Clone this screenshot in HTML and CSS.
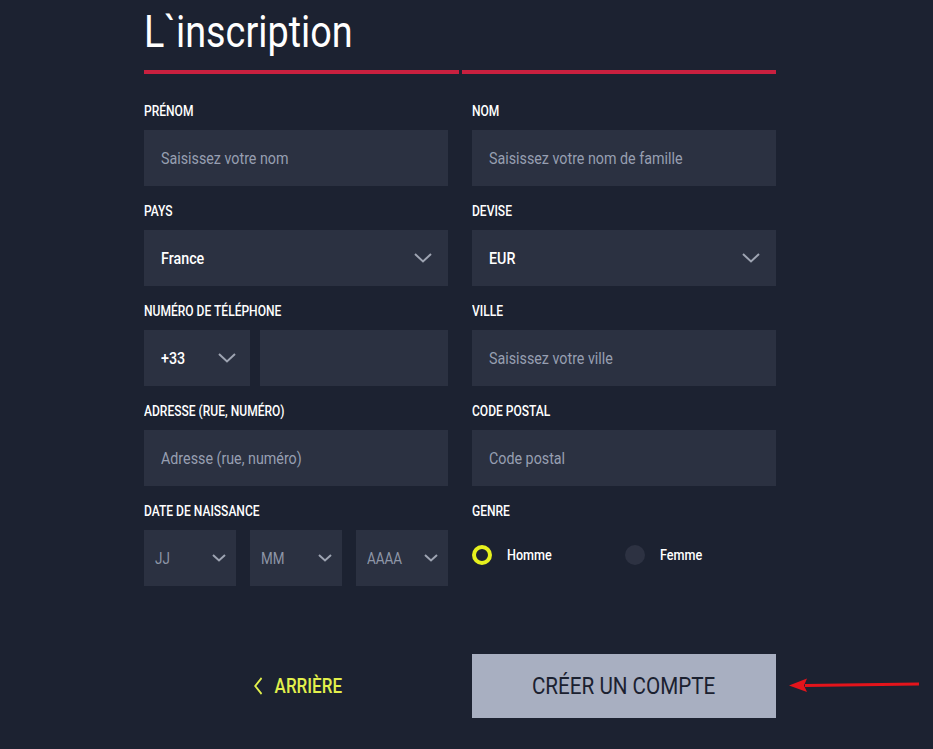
FILE: index.html
```html
<!DOCTYPE html>
<html lang="fr">
<head>
	<meta charset="utf-8">
	<title>L`inscription</title>
	<link rel="stylesheet" href="styles.css">
</head>
<body>

<div class="page">
	<h1 class="title">L`inscription</h1>
	<div class="rule"><span></span><span></span></div>

	<form class="form" action="" method="get">
		<div class="field">
			<label>PRÉNOM</label>
			<div class="box"><span class="ph">Saisissez votre nom</span></div>
		</div>
		<div class="field">
			<label>NOM</label>
			<div class="box"><span class="ph">Saisissez votre nom de famille</span></div>
		</div>

		<div class="field">
			<label>PAYS</label>
			<div class="box select"><span class="val">France</span>
				<svg class="chev" width="18" height="10" viewBox="0 0 18 10"><path d="M1 1 L9 8.5 L17 1" /></svg>
			</div>
		</div>
		<div class="field">
			<label>DEVISE</label>
			<div class="box select"><span class="val">EUR</span>
				<svg class="chev" width="18" height="10" viewBox="0 0 18 10"><path d="M1 1 L9 8.5 L17 1" /></svg>
			</div>
		</div>

		<div class="field">
			<label>NUMÉRO DE TÉLÉPHONE</label>
			<div class="phone">
				<div class="box select code"><span class="val">+33</span>
					<svg class="chev" width="18" height="10" viewBox="0 0 18 10"><path d="M1 1 L9 8.5 L17 1" /></svg>
				</div>
				<div class="box"></div>
			</div>
		</div>
		<div class="field">
			<label>VILLE</label>
			<div class="box"><span class="ph">Saisissez votre ville</span></div>
		</div>

		<div class="field">
			<label>ADRESSE (RUE, NUMÉRO)</label>
			<div class="box"><span class="ph">Adresse (rue, numéro)</span></div>
		</div>
		<div class="field">
			<label>CODE POSTAL</label>
			<div class="box"><span class="ph">Code postal</span></div>
		</div>

		<div class="field">
			<label>DATE DE NAISSANCE</label>
			<div class="date">
				<div class="box select small"><span class="ph">JJ</span>
					<svg class="chev" width="14" height="8" viewBox="0 0 14 8"><path d="M1 1 L7 6.5 L13 1" /></svg>
				</div>
				<div class="box select small"><span class="ph">MM</span>
					<svg class="chev" width="14" height="8" viewBox="0 0 14 8"><path d="M1 1 L7 6.5 L13 1" /></svg>
				</div>
				<div class="box select small"><span class="ph">AAAA</span>
					<svg class="chev" width="14" height="8" viewBox="0 0 14 8"><path d="M1 1 L7 6.5 L13 1" /></svg>
				</div>
			</div>
		</div>
		<div class="field">
			<label>GENRE</label>
			<div class="genre">
				<div class="radio on"><i></i><span>Homme</span></div>
				<div class="radio"><i></i><span>Femme</span></div>
			</div>
		</div>
	</form>

	<div class="actions">
		<a href="#" class="back">
			<svg width="11" height="18" viewBox="0 0 11 18"><path d="M9.5 1 L2 9 L9.5 17" /></svg>
			ARRIÈRE
		</a>
		<a href="#" class="create"><span>CRÉER UN COMPTE</span></a>
	</div>
</div>

<!-- flèche rouge -->
<svg class="arrow" width="136" height="16" viewBox="0 0 136 16">
	<path d="M16 7 L130 5.5 L130 8.5 L16 10 Z" fill="#e3141b" />
	<path d="M0 8.5 L18 1.5 L15 8.5 L18 15 Z" fill="#e3141b" />
</svg>

</body>
</html>
```

FILE: styles.css
```css
* { margin:0px; padding:0px; box-sizing:border-box; }
body { background:#1c2231; font-family:Roboto, "Liberation Sans", sans-serif; color:#fff; position:relative; min-height:749px; }

/* texte resserré façon "condensed" */
.title, .field label, .ph, .val, .radio span, .create span { display:inline-block; transform:scaleX(0.85); transform-origin:left center; }

.page { width:632px; margin-left:144px; padding-top:6px; }

.title { display:block; font-size:45px; line-height:52px; font-weight:400; color:#fff; transform:scaleX(0.84); }

.rule { display:flex; gap:3px; margin-top:12px; }
.rule span { display:block; flex:1; height:4px; background:#c8203f; }

.form { display:grid; grid-template-columns:304px 304px; column-gap:24px; row-gap:15px; margin-top:27px; }
.field label { display:block; font-size:14px; line-height:20px; font-weight:500; color:#fff; margin-bottom:9px; transform:scaleX(0.86); }

.box { height:56px; background:#2b3141; display:flex; align-items:center; padding-left:17px; padding-right:16px; font-size:17px; }
.box .ph { color:#979fb1; transform:scaleX(0.84); }
.box .val { color:#fff; font-weight:500; transform:scaleX(0.84); }
.select { justify-content:space-between; }
.chev path { fill:none; stroke:#9ea4b2; stroke-width:2; }

.phone { display:flex; gap:10px; }
.phone .code { width:106px; padding-right:14px; }
.phone .box:last-child { flex:1; }

.date { display:flex; gap:14px; }
.date .small { width:92px; padding-left:11px; padding-right:10px; font-size:16px; }
.date .small .ph { color:#8e96a7; }

.genre { height:56px; display:grid; grid-template-columns:153px 151px; align-items:center; padding-bottom:6px; }
.radio { display:flex; align-items:center; gap:15px; font-size:15px; font-weight:500; }
.radio span { transform:scaleX(0.84); }
.radio i { display:block; width:20px; height:20px; border-radius:50%; background:#2d3242; }
.radio.on i { background:transparent; border:4px solid #e6f11e; }

.actions { display:grid; grid-template-columns:304px 304px; column-gap:24px; margin-top:68px; }
.back { display:flex; align-items:center; justify-content:center; gap:14px; color:#e2f04c; text-decoration:none; font-size:20px; font-weight:500; transform:scaleX(0.85); padding-left:4px; }
.back path { fill:none; stroke:#e2f04c; stroke-width:2; }
.create { display:flex; align-items:center; justify-content:center; height:64px; background:#a8afc1; color:#1b2130; text-decoration:none; font-size:24px; font-weight:400; }
.create span { transform:scaleX(0.86); transform-origin:center; }

.arrow { position:absolute; left:789px; top:677px; }
```
